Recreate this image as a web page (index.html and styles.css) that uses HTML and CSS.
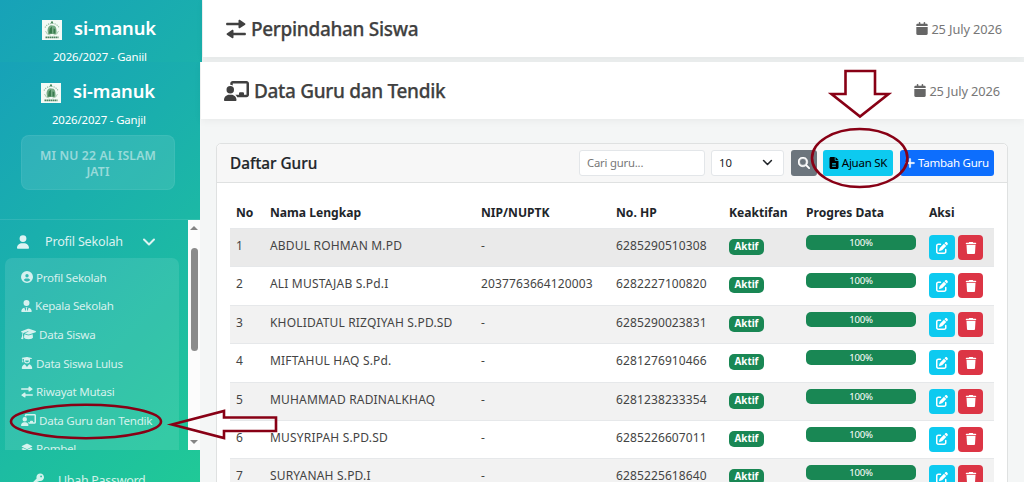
FILE: index.html
```html
<!DOCTYPE html>
<html lang="id">
<head>
  <meta charset="UTF-8" />
  <title>si-manuk - Data Guru dan Tendik</title>
  <meta name="viewport" content="width=device-width, initial-scale=1.0"/>
  <link rel="stylesheet" href="styles.css">
</head>
<body>

<!-- icons -->
<svg class="hidden">
  <symbol id="i-user" viewBox="0 0 448 512"><path d="M224 256A128 128 0 1 0 224 0a128 128 0 1 0 0 256zm-45.7 48C79.8 304 0 383.8 0 482.3C0 498.7 13.3 512 29.7 512H418.3c16.4 0 29.7-13.3 29.7-29.7C448 383.8 368.2 304 269.7 304H178.3z"/></symbol>
  <symbol id="i-circle-user" viewBox="0 0 512 512"><path d="M399 384.2C376.9 345.8 335.4 320 288 320H224c-47.4 0-88.9 25.8-111 64.2c35.2 39.2 86.2 63.8 143 63.8s107.8-24.7 143-63.8zM0 256a256 256 0 1 1 512 0A256 256 0 1 1 0 256zm256 16a72 72 0 1 0 0-144 72 72 0 1 0 0 144z"/></symbol>
  <symbol id="i-tie" viewBox="0 0 448 512"><path d="M96 128a128 128 0 1 0 256 0A128 128 0 1 0 96 128zM209 359l-24-40c-6-11 1-15 8-15h62c8 0 14 6 8 15l-24 40 33 124 36-146c2-8 10-13 18-11 70 18 122 82 122 157 0 16-13 29-29 29H29c-16 0-29-13-29-29 0-75 52-139 122-157 8-2 16 3 18 11l36 146z"/></symbol>
  <symbol id="i-cap" viewBox="0 0 640 512"><path d="M320 32c-8 0-16 1-24 4L16 137c-10 4-16 13-16 23s6 19 16 23l58 21c-17 25-26 56-26 88v28c0 28-11 57-22 80-7 13-14 25-23 37-3 4-4 10-2 15s6 9 11 10l64 16c4 1 9 0 13-2s6-6 7-11c9-43 4-81-3-109-3-14-8-29-13-43v-21c0-30 10-59 28-82l188-75c8-3 17 1 21 9s-1 17-9 21l-155 62 143 51c8 3 16 4 24 4s16-1 24-4l280-101c10-4 16-13 16-23s-6-19-16-23L344 36c-8-3-16-4-24-4zM128 408c0 35 86 72 192 72s192-37 192-72l-15-146-142 52c-23 8-47 8-70 0l-142-52z"/></symbol>
  <symbol id="i-graduate" viewBox="0 0 448 512"><path d="M219 1L20 34c-9 2-18 8-18 18s9 16 18 18l12 2v60l-16 88h56l-16-88V80l40 7v57a128 128 0 0 0 256 0V87l76-13c9-2 18-8 18-18s-9-16-18-18L229 1zM144 144h160a80 80 0 0 1-160 0zM133 308C58 320 0 400 0 482c0 17 13 30 30 30h388c17 0 30-13 30-30 0-82-58-162-133-174l-91 116z"/></symbol>
  <symbol id="i-swap" viewBox="0 0 512 512"><path d="M32 96h288V42c0-22 26-33 41-18l130 88c9 8 9 24 0 32l-130 88c-15 15-41 4-41-18v-54H32c-42 0-42-64 0-64zM480 352H192v-54c0-22-26-33-41-18L21 368c-9 8-9 24 0 32l130 88c15 15 41 4 41-18v-54h288c42 0 42-64 0-64z"/></symbol>
  <symbol id="i-board" viewBox="0 0 640 512"><path d="M160 64c0-35 29-64 64-64h352c35 0 64 29 64 64v288c0 35-29 64-64 64H337c-11-24-28-46-48-62h95v-34c0-18 14-32 32-32h64c18 0 32 14 32 32v32h64V64H224v49c-19-11-41-17-64-17zM64 224a96 96 0 1 1 192 0 96 96 0 1 1-192 0zM133 352h54c74 0 133 60 133 133 0 15-12 27-27 27H27c-15 0-27-12-27-27 0-73 60-133 133-133z"/></symbol>
  <symbol id="i-layers" viewBox="0 0 576 512"><path d="M264 5c15-7 33-7 48 0l219 101c8 4 13 13 13 22s-5 18-13 22L312 251c-15 7-33 7-48 0L45 150c-8-4-13-13-13-22s5-18 13-22zM476 210l55 25c8 4 13 13 13 22s-5 18-13 22L312 380c-15 7-33 7-48 0L45 279c-8-4-13-13-13-22s5-18 13-22l55-25 151 69c24 11 50 11 74 0z"/></symbol>
  <symbol id="i-key" viewBox="0 0 512 512"><path d="M336 352c97 0 176-79 176-176S433 0 336 0 160 79 160 176c0 19 3 37 8 54L7 391c-5 5-7 11-7 17v80c0 13 11 24 24 24h80c13 0 24-11 24-24v-40h40c13 0 24-11 24-24v-40h40c6 0 13-3 17-7l33-33c17 5 35 8 54 8zm40-256a40 40 0 1 1 0 80 40 40 0 1 1 0-80z"/></symbol>
  <symbol id="i-calendar" viewBox="0 0 448 512"><path d="M96 32V64H48C21.5 64 0 85.5 0 112v48H448V112c0-26.5-21.5-48-48-48H352V32c0-17.7-14.3-32-32-32s-32 14.3-32 32V64H160V32c0-17.7-14.3-32-32-32S96 14.3 96 32zM448 192H0V464c0 26.5 21.5 48 48 48H400c26.5 0 48-21.5 48-48V192z"/></symbol>
  <symbol id="i-search" viewBox="0 0 512 512"><path stroke="currentColor" stroke-width="24" d="M416 208c0 45.9-14.9 88.3-40 122.7L502.6 457.4c12.5 12.5 12.5 32.8 0 45.3s-32.8 12.5-45.3 0L330.7 376c-34.4 25.2-76.8 40-122.7 40C93.1 416 0 322.9 0 208S93.1 0 208 0S416 93.1 416 208zM208 352a144 144 0 1 0 0-288 144 144 0 1 0 0 288z"/></symbol>
  <symbol id="i-file" viewBox="0 0 384 512"><path fill-rule="evenodd" d="M64 0C29 0 0 29 0 64v384c0 35 29 64 64 64h256c35 0 64-29 64-64V160H256c-18 0-32-14-32-32V0zm192 0v128h128zM112 256h160v32H112zm0 64h160v32H112zm0 64h160v32H112z"/></symbol>
  <symbol id="i-plus" viewBox="0 0 448 512"><path stroke="currentColor" stroke-width="16" d="M256 80c0-18-14-32-32-32s-32 14-32 32v144H48c-18 0-32 14-32 32s14 32 32 32h144v144c0 18 14 32 32 32s32-14 32-32V288h144c18 0 32-14 32-32s-14-32-32-32H256z"/></symbol>
  <symbol id="i-edit" viewBox="0 0 512 512"><path d="M471.6 21.7c-21.9-21.9-57.3-21.9-79.2 0L362.3 51.7l97.9 97.9 30.1-30.1c21.9-21.9 21.9-57.3 0-79.2L471.6 21.7zm-299.2 220c-6.1 6.1-10.8 13.6-13.5 21.9l-29.6 88.8c-2.9 8.6-.6 18.1 5.8 24.6s15.9 8.7 24.6 5.8l88.8-29.6c8.2-2.7 15.7-7.4 21.9-13.5L437.7 172.3 339.7 74.3 172.4 241.7zM96 64C43 64 0 107 0 160V416c0 53 43 96 96 96H352c53 0 96-43 96-96V320c0-17.7-14.3-32-32-32s-32 14.3-32 32v96c0 17.7-14.3 32-32 32H96c-17.7 0-32-14.3-32-32V160c0-17.7 14.3-32 32-32h96c17.7 0 32-14.3 32-32s-14.3-32-32-32H96z"/></symbol>
  <symbol id="i-trash" viewBox="0 0 448 512"><path d="M135.2 17.7L128 32H32C14.3 32 0 46.3 0 64S14.3 96 32 96H416c17.7 0 32-14.3 32-32s-14.3-32-32-32H320l-7.2-14.3C307.4 6.8 296.3 0 284.2 0H163.8c-12.1 0-23.2 6.8-28.6 17.7zM416 128H32L53.2 467c1.6 25.3 22.6 45 47.9 45H346.9c25.3 0 46.3-19.7 47.9-45L416 128z"/></symbol>
  <symbol id="i-chevron" viewBox="0 0 14 14"><path d="M2 4.5l5 5 5-5" fill="none" stroke="currentColor" stroke-width="2" stroke-linecap="round" stroke-linejoin="round"/></symbol>
  <symbol id="i-logo" viewBox="0 0 20 20">
    <rect width="20" height="20" fill="#f4faf6"/>
    <path d="M3 7.5A8 8 0 0 1 17 7.5" fill="none" stroke="#8fb99d" stroke-width="1.2" stroke-dasharray="1.2 1"/>
    <circle cx="10" cy="2.4" r="1.1" fill="#4d8a60"/>
    <path d="M5.5 10Q6 6 9 5.2l3.5.6q2.500 1.500 2 8.200h-8.500z" fill="#74ab84"/>
    <path d="M7 13.500l.8-5 2.200-2v7zm4.500-5l1.800.5v4.500h-1.800z" fill="#397a4e"/>
    <path d="M3.500 11q1 4 5 4M16.500 11q-1 4-5 4" fill="none" stroke="#a9ccb3"/>
    <path d="M3.500 17.300h13" stroke="#4c8560" stroke-width="1.800" stroke-dasharray="1.600 .4"/>
  </symbol>
</svg>

<div class="page">
  <div class="strip">
    <div class="strip-side">
      <div class="brand"><svg class="logo"><use href="#i-logo"/></svg><span>si-manuk</span></div>
      <div class="year">2026/2027 - Ganiil</div>
    </div>
    <div class="strip-main">
      <div class="topbar">
        <h1><svg class="ic-swap"><use href="#i-swap"/></svg><span>Perpindahan Siswa</span></h1>
        <div class="date"><svg><use href="#i-calendar"/></svg>25 July 2026</div>
      </div>
    </div>
  </div>

  <div class="app">
    <aside class="sidebar">
      <div class="side-head">
        <div class="brand"><svg class="logo"><use href="#i-logo"/></svg><span>si-manuk</span></div>
        <div class="year">2026/2027 - Ganjil</div>
        <div class="school">MI NU 22 AL ISLAM JATI</div>
      </div>
      <div class="side-menu">
        <div class="menu-list">
          <div class="menu-title"><svg class="ic-user"><use href="#i-user"/></svg><span>Profil Sekolah</span><svg class="ic-chev"><use href="#i-chevron"/></svg></div>
          <ul class="submenu">
            <li><svg class="w12"><use href="#i-circle-user"/></svg><span>Profil Sekolah</span></li>
            <li><svg class="w11"><use href="#i-tie"/></svg><span>Kepala Sekolah</span></li>
            <li><svg class="w15"><use href="#i-cap"/></svg><span>Data Siswa</span></li>
            <li><svg class="w12"><use href="#i-graduate"/></svg><span>Data Siswa Lulus</span></li>
            <li><svg class="w12"><use href="#i-swap"/></svg><span>Riwayat Mutasi</span></li>
            <li><svg class="w15"><use href="#i-board"/></svg><span>Data Guru dan Tendik</span></li>
            <li><svg class="w12"><use href="#i-layers"/></svg><span>Rombel</span></li>
          </ul>
        </div>
        <div class="scrollbar"><i class="up"></i><i class="thumb"></i><i class="down"></i></div>
      </div>
      <div class="side-foot"><svg><use href="#i-key"/></svg><span>Ubah Password</span></div>
    </aside>

    <main class="content">
      <div class="topbar">
        <h1><svg class="ic-board"><use href="#i-board"/></svg><span>Data Guru dan Tendik</span></h1>
        <div class="date"><svg><use href="#i-calendar"/></svg>25 July 2026</div>
      </div>

      <section class="card">
        <div class="card-header">
          <h2>Daftar Guru</h2>
          <input type="text" class="search" placeholder="Cari guru..." />
          <div class="select"><span>10</span><svg><use href="#i-chevron"/></svg></div>
          <button class="btn btn-gray"><svg><use href="#i-search"/></svg></button>
          <button class="btn btn-cyan"><svg><use href="#i-file"/></svg>Ajuan SK</button>
          <button class="btn btn-blue"><svg><use href="#i-plus"/></svg>Tambah Guru</button>
        </div>
        <table>
          <colgroup>
            <col class="c-no"><col class="c-nama"><col class="c-nip"><col class="c-hp"><col class="c-aktif"><col class="c-progres"><col class="c-aksi">
          </colgroup>
          <thead>
            <tr><th>No</th><th>Nama Lengkap</th><th>NIP/NUPTK</th><th>No. HP</th><th>Keaktifan</th><th>Progres Data</th><th>Aksi</th></tr>
          </thead>
          <tbody>
            <tr class="active">
              <td>1</td><td class="nama">ABDUL ROHMAN M.PD</td><td>-</td><td>6285290510308</td>
              <td><span class="badge">Aktif</span></td><td><div class="progress">100%</div></td>
              <td><div class="aksi"><button class="edit"><svg><use href="#i-edit"/></svg></button><button class="del"><svg><use href="#i-trash"/></svg></button></div></td>
            </tr>
            <tr>
              <td>2</td><td class="nama">ALI MUSTAJAB S.Pd.I</td><td>2037763664120003</td><td>6282227100820</td>
              <td><span class="badge">Aktif</span></td><td><div class="progress">100%</div></td>
              <td><div class="aksi"><button class="edit"><svg><use href="#i-edit"/></svg></button><button class="del"><svg><use href="#i-trash"/></svg></button></div></td>
            </tr>
            <tr>
              <td>3</td><td class="nama">KHOLIDATUL RIZQIYAH S.PD.SD</td><td>-</td><td>6285290023831</td>
              <td><span class="badge">Aktif</span></td><td><div class="progress">100%</div></td>
              <td><div class="aksi"><button class="edit"><svg><use href="#i-edit"/></svg></button><button class="del"><svg><use href="#i-trash"/></svg></button></div></td>
            </tr>
            <tr>
              <td>4</td><td class="nama">MIFTAHUL HAQ S.Pd.</td><td>-</td><td>6281276910466</td>
              <td><span class="badge">Aktif</span></td><td><div class="progress">100%</div></td>
              <td><div class="aksi"><button class="edit"><svg><use href="#i-edit"/></svg></button><button class="del"><svg><use href="#i-trash"/></svg></button></div></td>
            </tr>
            <tr>
              <td>5</td><td class="nama">MUHAMMAD RADINALKHAQ</td><td>-</td><td>6281238233354</td>
              <td><span class="badge">Aktif</span></td><td><div class="progress">100%</div></td>
              <td><div class="aksi"><button class="edit"><svg><use href="#i-edit"/></svg></button><button class="del"><svg><use href="#i-trash"/></svg></button></div></td>
            </tr>
            <tr>
              <td>6</td><td class="nama">MUSYRIPAH S.PD.SD</td><td>-</td><td>6285226607011</td>
              <td><span class="badge">Aktif</span></td><td><div class="progress">100%</div></td>
              <td><div class="aksi"><button class="edit"><svg><use href="#i-edit"/></svg></button><button class="del"><svg><use href="#i-trash"/></svg></button></div></td>
            </tr>
            <tr>
              <td>7</td><td class="nama">SURYANAH S.PD.I</td><td>-</td><td>6285225618640</td>
              <td><span class="badge">Aktif</span></td><td><div class="progress">100%</div></td>
              <td><div class="aksi"><button class="edit"><svg><use href="#i-edit"/></svg></button><button class="del"><svg><use href="#i-trash"/></svg></button></div></td>
            </tr>
          </tbody>
        </table>
      </section>
    </main>
  </div>

  <!-- guide marks over the page -->
  <svg class="marks" viewBox="0 0 1024 482">
    <ellipse cx="86" cy="421.5" rx="75" ry="16.7"/>
    <path d="M172 424.500L224 411v6.500h52V431h-52v7z"/>
    <ellipse cx="859.7" cy="158" rx="47.7" ry="29"/>
    <path d="M845.500 71H875v23h13.500L860 116.500 831.500 94h14z"/>
  </svg>
</div>

</body>
</html>
```
FILE: styles.css
```css
* {
  box-sizing: border-box;
}

body {
  margin: 0;
  font-family: 'Noto Sans', 'Open Sans', sans-serif;
  font-size: 12px;
  color: #212529;
  background: #fff;
  overflow: hidden;
}

svg {
  fill: currentColor;
  flex: none;
}

.hidden {
  display: none;
}

.page {
  position: relative;
  width: 1024px;
  height: 482px;
  overflow: hidden;
}

/* upper strip */
.strip {
  display: flex;
  height: 62px;
  overflow: hidden;
}

.strip-side {
  width: 202px;
  padding: 15px 0 0 1px;
  color: #fff;
  background: linear-gradient(135deg, #17a2b8, #20c997) 0 0 / 202px 482px;
}

.strip-main {
  flex: 1;
  padding-left: 1px;
  background: #eff2f2;
}

.strip-main .topbar {
  padding-right: 22px;
}

.brand {
  display: flex;
  align-items: center;
  height: 26px;
  padding-left: 41px;
  gap: 12px;
  font-size: 18.4px;
  font-weight: 600;
  letter-spacing: -0.1px;
}

.brand span {
  margin-top: -1px;
}

.logo {
  width: 20px;
  height: 20px;
  margin-top: 4px;
}

.year {
  height: 18px;
  margin-top: 7px;
  line-height: 18px;
  padding-left: 52px;
  font-size: 11.4px;
  letter-spacing: -0.15px;
  white-space: nowrap;
}

/* sidebar */
.app {
  display: flex;
  height: 420px;
}

.sidebar {
  width: 200px;
  display: flex;
  flex-direction: column;
  color: #fff;
  background: linear-gradient(135deg, #17a2b8, #20c997);
}

.side-head {
  height: 158px;
  padding-top: 16px;
  border-bottom: 1px solid rgba(255, 255, 255, 0.1);
}

.school {
  width: 154px;
  height: 55px;
  margin: 6px 0 0 21px;
  padding: 12px 14px;
  border: 1px solid rgba(255, 255, 255, 0.06);
  border-radius: 8px;
  background: rgba(255, 255, 255, 0.1);
  color: rgba(255, 255, 255, 0.5);
  font-size: 12.2px;
  font-weight: 600;
  letter-spacing: 0.15px;
  line-height: 15.5px;
  text-align: center;
}

.side-menu {
  display: flex;
  height: 230px;
  overflow: hidden;
}

.menu-list {
  width: 188px;
  padding: 0 9px 0 5px;
}

.menu-title {
  display: flex;
  align-items: center;
  height: 38px;
  padding: 5px 0 0 12px;
  font-size: 12.6px;
  letter-spacing: -0.2px;
  color: rgba(255, 255, 255, 0.85);
}

.menu-title span {
  width: 97px;
  margin-left: 16px;
}

.ic-user {
  width: 12px;
  height: 14px;
}

.ic-chev {
  width: 14px;
  height: 14px;
}

.submenu {
  list-style: none;
  margin: 0;
  padding: 5px 0 0 16px;
  height: 230px;
  border-radius: 7px;
  background: rgba(255, 255, 255, 0.1);
  color: rgba(255, 255, 255, 0.8);
  font-size: 11.6px;
}

.submenu li {
  display: flex;
  align-items: center;
  gap: 3px;
  height: 28.6px;
  white-space: nowrap;
  letter-spacing: -0.28px;
}

.submenu svg {
  height: 12px;
}

.w11 {
  width: 11px;
}

.w12 {
  width: 12px;
}

.w15 {
  width: 15px;
}

.scrollbar {
  width: 12px;
  display: flex;
  flex-direction: column;
  align-items: center;
  background: #fcfcfc;
}

.scrollbar .up {
  margin-top: 6px;
  border: 4px solid transparent;
  border-top: 0;
  border-bottom: 4px solid #858585;
}

.scrollbar .thumb {
  width: 7px;
  height: 103px;
  margin: 18px 0 89px;
  border-radius: 4px;
  background: #8b8b8b;
}

.scrollbar .down {
  border: 4px solid transparent;
  border-bottom: 0;
  border-top: 4px solid #858585;
}

.side-foot {
  display: flex;
  height: 32px;
  padding: 21px 0 0 33px;
  gap: 14px;
  font-size: 12.5px;
  line-height: 20px;
  letter-spacing: -0.3px;
  color: rgba(255, 255, 255, 0.8);
}

.side-foot svg {
  width: 11px;
  height: 16px;
}

/* content */
.content {
  flex: 1;
  padding-left: 1px;
  background: #f4f6f6;
}

.topbar {
  display: flex;
  justify-content: space-between;
  align-items: center;
  height: 57px;
  padding: 0 24px 0 23px;
  background: #fff;
  box-shadow: 0 2px 8px rgba(0, 0, 0, 0.05);
}

h1 {
  display: flex;
  align-items: center;
  gap: 5px;
  margin: 0;
  font-size: 19px;
  font-weight: 500;
  letter-spacing: -0.32px;
  color: #404040;
  -webkit-text-stroke: 0.25px #404040;
}

.ic-swap {
  width: 20px;
  height: 20px;
}

.ic-board {
  width: 25px;
  height: 20px;
}

.date {
  display: flex;
  align-items: center;
  gap: 3px;
  font-size: 12.8px;
  letter-spacing: -0.1px;
  color: #777;
}

.date svg {
  width: 12px;
  height: 13px;
  color: #666;
}

.card {
  width: 792px;
  height: 380px;
  margin: 24px 0 0 15px;
  border: 1px solid #dfe1e1;
  border-radius: 5px;
  background: #fff;
}

.card-header {
  display: flex;
  align-items: center;
  height: 39px;
  padding: 0 13px 1px;
  border-bottom: 1px solid #dfe1e1;
  border-radius: 5px 5px 0 0;
  background: #f7f7f7;
}

h2 {
  flex: 1;
  margin: 0;
  font-size: 15.3px;
  font-weight: 500;
  -webkit-text-stroke: 0.2px #212529;
}

.search {
  width: 126px;
  height: 26px;
  margin-right: 6px;
  padding: 0 7px;
  border: 1px solid #e3e6e9;
  border-radius: 3px;
  font: 11.3px 'Noto Sans', sans-serif;
  letter-spacing: -0.2px;
}

.search::placeholder {
  color: #777;
}

.select {
  display: flex;
  justify-content: space-between;
  align-items: center;
  width: 73px;
  height: 26px;
  margin-right: 7px;
  padding: 0 10px 0 7px;
  border: 1px solid #e3e6e9;
  border-radius: 3px;
  background: #fff;
  font-size: 11.3px;
}

.select svg {
  width: 11px;
  height: 11px;
}

.btn {
  display: flex;
  align-items: center;
  justify-content: center;
  gap: 3px;
  height: 26px;
  padding: 0;
  border: none;
  border-radius: 3px;
  color: #fff;
  font: 11.5px 'Noto Sans', sans-serif;
  letter-spacing: -0.25px;
  white-space: nowrap;
}

.btn svg {
  width: 10px;
  height: 12px;
}

.btn-gray {
  width: 26px;
  margin-right: 6px;
  background: #6c757d;
}

.btn-gray svg {
  width: 12px;
  overflow: visible;
}

.btn-cyan {
  width: 70px;
  margin-right: 7px;
  background: #0dcaf0;
  color: #000;
}

.btn-blue {
  width: 94px;
  background: #0d6efd;
}

table {
  width: 764px;
  margin: 14px 0 0 13px;
  border-collapse: collapse;
  table-layout: fixed;
}

.c-no { width: 34px; }
.c-nama { width: 211px; }
.c-nip { width: 135px; }
.c-hp { width: 113px; }
.c-aktif { width: 77px; }
.c-progres { width: 123px; }
.c-aksi { width: 71px; }

th, td {
  padding: 0 0 0 6px;
  text-align: left;
  vertical-align: top;
  white-space: nowrap;
}

th {
  height: 31px;
  font-size: 12.1px;
  font-weight: 700;
  line-height: 31px;
}

td {
  height: 38.4px;
  padding-top: 6px;
  border-top: 1px solid #e6e8ea;
  color: #444;
  line-height: 21px;
  letter-spacing: 0.12px;
}

td.nama {
  letter-spacing: 0.18px;
}

tbody tr:nth-child(odd) {
  background: #f2f2f2;
}

tbody tr.active {
  background: #eaeaea;
}

.badge {
  display: block;
  width: 35px;
  height: 16px;
  margin-top: 4px;
  border-radius: 5px;
  background: #198754;
  color: #fff;
  font-size: 9.8px;
  font-weight: 700;
  letter-spacing: 0;
  line-height: 16px;
  text-align: center;
}

.progress {
  width: 110px;
  height: 15px;
  border-radius: 5px;
  background: #198754;
  color: #fff;
  font-size: 9.6px;
  letter-spacing: -0.2px;
  line-height: 15px;
  text-align: center;
}

.aksi {
  display: flex;
  gap: 3px;
}

.aksi button {
  display: flex;
  align-items: center;
  justify-content: center;
  width: 25px;
  height: 25px;
  padding: 0;
  border: none;
  border-radius: 4px;
  color: #fff;
}

.aksi .edit {
  width: 26px;
  background: #0dcaf0;
}

.aksi .del {
  background: #dc3545;
}

.aksi svg {
  width: 12px;
  height: 12px;
}

.marks {
  position: absolute;
  top: 0;
  left: 0;
  width: 1024px;
  height: 482px;
  fill: none;
  stroke: #880015;
  stroke-width: 2.6;
  pointer-events: none;
}
```
